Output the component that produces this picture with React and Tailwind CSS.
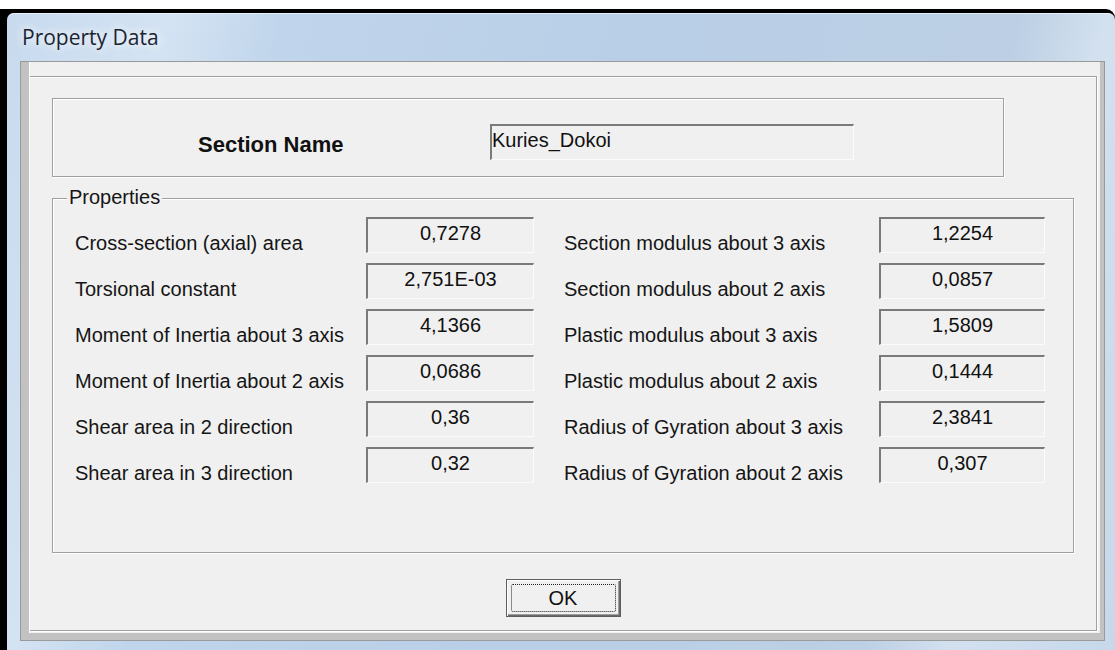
import React from "react";

const leftRows = [
  ["Cross-section (axial) area", "0,7278"],
  ["Torsional constant", "2,751E-03"],
  ["Moment of Inertia about 3 axis", "4,1366"],
  ["Moment of Inertia about 2 axis", "0,0686"],
  ["Shear area in 2 direction", "0,36"],
  ["Shear area in 3 direction", "0,32"],
];

const rightRows = [
  ["Section modulus about 3 axis", "1,2254"],
  ["Section modulus about 2 axis", "0,0857"],
  ["Plastic modulus about 3 axis", "1,5809"],
  ["Plastic modulus about 2 axis", "0,1444"],
  ["Radius of Gyration about 3 axis", "2,3841"],
  ["Radius of Gyration about 2 axis", "0,307"],
];

// Sunken read-only field in the classic Windows style
function ValueBox({ value, width }) {
  return (
    <div
      className={`${width} h-[36px] shrink-0 border-t-2 border-l-2 border-r border-b border-t-[#7a7a7a] border-l-[#7a7a7a] border-r-[#fbfbfb] border-b-[#fbfbfb] bg-[#f0f0f0] pt-[3px] text-center text-[20px] leading-[23px] text-[#111]`}
    >
      {value}
    </div>
  );
}

function PropRow({ left, right }) {
  return (
    <div className="flex h-[46px] items-start">
      <div className="w-[291px] shrink-0 pt-[15px] text-[20px] leading-[23px] text-[#151515]">
        {left[0]}
      </div>
      <ValueBox value={left[1]} width="w-[168px]" />
      <div className="w-[30px] shrink-0" />
      <div className="w-[315px] shrink-0 pt-[15px] text-[20px] leading-[23px] text-[#151515]">
        {right[0]}
      </div>
      <ValueBox value={right[1]} width="w-[166px]" />
    </div>
  );
}

export default function App() {
  return (
    <div
      className="h-[650px] w-[1115px] overflow-hidden bg-white"
      style={{ fontFamily: '"Liberation Sans", Arial, sans-serif' }}
    >
      <div className="h-[9px]" />
      {/* window with dark outline on top/left */}
      <div className="h-[641px] rounded-tr-[9px] bg-black pl-[7px] pt-[4px]">
        {/* aero glass frame */}
        <div className="flex h-[637px] flex-col rounded-t-[7px] bg-[linear-gradient(104deg,#c7daee_0%,#d4e3f3_13%,#c0d5eb_22%,#b9cfe7_50%,#bccfe4_80%,#d3e1ef_87%,#c6d8ea_100%)] pb-[9px] pl-[13px] pr-[10px] shadow-[inset_0_1px_0_rgba(255,255,255,0.6)]">
          {/* title bar */}
          <div className="flex h-[48px] items-center pl-[2px]">
            <span
              className="text-[21px] leading-none text-[#1b2433] [text-shadow:0_0_8px_rgba(255,255,255,0.95),0_0_14px_rgba(255,255,255,0.7)]"
              style={{ fontFamily: '"Open Sans", "Noto Sans", sans-serif' }}
            >
              Property Data
            </span>
          </div>

          {/* client area with raised grey frame */}
          <div className="flex flex-1 flex-col border border-[#9a9a9a] bg-[#c2c2c2] pb-[7px] pl-[8px] pr-[4px]">
            <div className="flex flex-1 flex-col border-l border-white bg-[#f0f0f0] pb-[2px] pr-[3px] pt-[14px]">
              {/* inner panel */}
              <div className="flex flex-1 flex-col border-b border-r border-t border-[#a0a0a0] pl-[22px] pt-[21px] shadow-[1px_1px_0_#ffffff,inset_0_1px_0_#ffffff]">
                {/* Section name group */}
                <div className="flex h-[79px] w-[952px] border border-[#a0a0a0] shadow-[1px_1px_0_#ffffff,inset_1px_1px_0_#ffffff]">
                  <div className="w-[437px] shrink-0 pl-[145px] pt-[33px] text-[22px] font-bold leading-[26px] text-[#111]">
                    Section Name
                  </div>
                  <div className="mt-[25px] h-[36px] w-[364px] border-t-2 border-l-2 border-r border-b border-t-[#7a7a7a] border-l-[#7a7a7a] border-r-[#fbfbfb] border-b-[#fbfbfb] bg-[#f0f0f0] pt-[3px] text-[20px] leading-[23px] text-[#111]">
                    Kuries_Dokoi
                  </div>
                </div>

                {/* Properties group */}
                <div className="relative mt-[21px] h-[355px] w-[1022px] border border-[#a0a0a0] pl-[22px] pt-[18px] shadow-[1px_1px_0_#ffffff,inset_1px_1px_0_#ffffff]">
                  <span className="absolute left-[14px] top-[-13px] bg-[#f0f0f0] px-[2px] text-[20px] leading-[23px] text-[#151515]">
                    Properties
                  </span>
                  {leftRows.map((row, i) => (
                    <PropRow key={row[0]} left={row} right={rightRows[i]} />
                  ))}
                </div>

                {/* OK button */}
                <div className="flex justify-center pr-[22px] pt-[26px]">
                  <button className="h-[38px] w-[115px] border border-[#5e5e5e] bg-[#f0f0f0] p-[4px] shadow-[inset_1px_1px_0_#ffffff,inset_-1px_-1px_0_#6a6a6a,inset_-2px_-2px_0_#a0a0a0]">
                    <div className="flex h-full w-full items-center justify-center rounded-[2px] border border-dotted border-[#222] text-[20px] leading-none text-[#111]">
                      OK
                    </div>
                  </button>
                </div>
              </div>
            </div>
          </div>
        </div>
      </div>
    </div>
  );
}
